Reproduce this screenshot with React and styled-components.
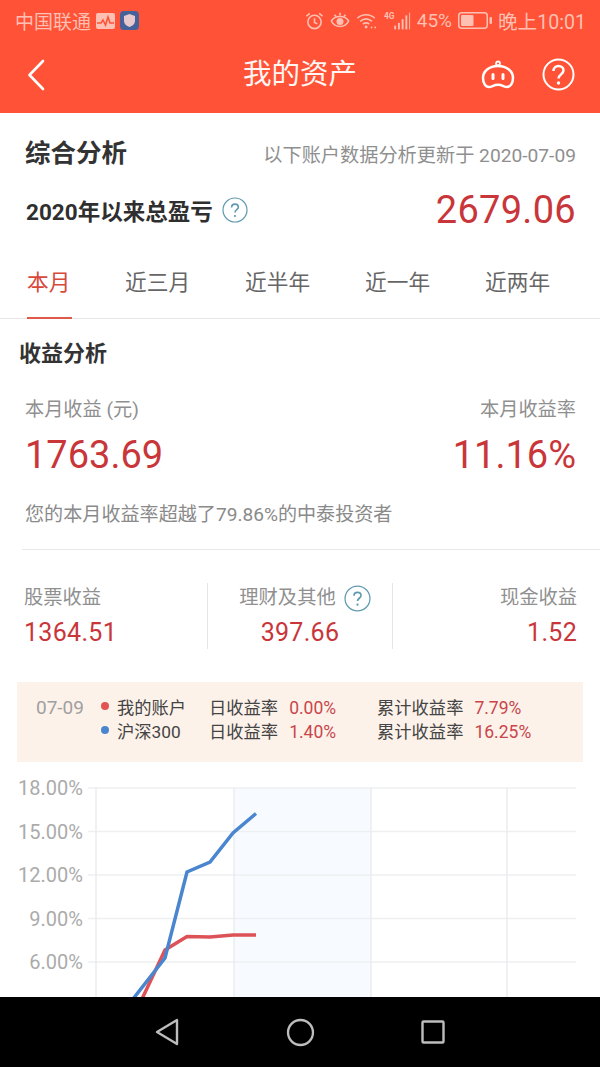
import React from 'react';
import styled, { createGlobalStyle } from 'styled-components';

const Global = createGlobalStyle`
  html, body { margin: 0; padding: 0; background: #fff; }
  body { font-family: "Roboto", "Noto Sans CJK SC", sans-serif; }
  * { box-sizing: border-box; }
`;
const Page = styled.div`
  width: 600px; height: 1067px; display: flex; flex-direction: column; overflow: hidden; background: #fff;
`;
const Top = styled.header`
  height: 113px; background: #ff5236; flex: none; display: flex; flex-direction: column;
`;
const StatusBar = styled.div`
  height: 40px; padding: 1px 14px 0 15px; display: flex; align-items: center; justify-content: space-between;
  color: #fdc0b3; font-size: 19px;
`;
const StatusGroup = styled.div`
  display: flex; align-items: center; gap: ${p => p.$gap || 3}px;
`;
const NavRow = styled.div`
  flex: 1; padding: 0 25px 4px 27px; display: flex; align-items: center; justify-content: space-between; position: relative;
`;
const Title = styled.h1`
  position: absolute; left: 0; right: 0; top: 15px; margin: 0; text-align: center; color: #fff;
  font-size: 28.5px; font-weight: 400; line-height: 40px; opacity: .95;
`;
const NavIcons = styled.div`
  display: flex; align-items: center; gap: 27px; position: relative;
`;
const Main = styled.main`
  flex: 1; min-height: 0; overflow: hidden; display: flex; flex-direction: column;
`;
const Summary = styled.section`
  padding: 23px 24px 0 25px;
`;
const SplitRow = styled.div`
  display: flex; justify-content: space-between; align-items: ${p => p.$align || 'center'};
`;
const Heading = styled.h2`
  margin: 0; font-size: 25.5px; font-weight: 700; line-height: 34px; color: #333;
`;
const UpdateNote = styled.span`
  font-size: 19.2px; color: #8f8f8f; padding-top: 1px;
`;
const TotalRow = styled(SplitRow)`
  margin-top: 19px; height: 42px; padding-left: 1px;
`;
const TotalLabel = styled.div`
  display: flex; align-items: center; gap: 9px; font-size: 22.5px; font-weight: 700; color: #2f2f2f;
`;
const TotalValue = styled.span`
  font-size: 38px; color: #c9363a; line-height: 42px; letter-spacing: .3px;
`;
const Tabs = styled.nav`
  margin-top: 29px; height: 59px; display: flex; border-bottom: 1px solid #e6e6e6; flex: none;
`;
const Tab = styled.div`
  flex: none; width: ${p => p.$first ? 125 : 120}px; padding-left: ${p => p.$first ? 27 : 0}px; display: flex;
  font-size: 21.7px; color: ${p => p.$active ? '#d8483a' : '#666'};
`;
const TabLabel = styled.span`
  height: 59px; line-height: 46px;
  ${p => p.$active ? 'border-bottom: 2px solid #e05a49; width: 45px;' : ''}
`;
const Analysis = styled.section`
  padding: 17px 0 0; flex: none;
`;
const SectionTitle = styled.h3`
  margin: 0 0 0 19px; font-size: 22px; font-weight: 700; line-height: 36px; color: #333;
`;
const EarningsRow = styled(SplitRow)`
  padding: 24px 24px 0 25px;
`;
const Stack = styled.div`
  display: flex; flex-direction: column; align-items: ${p => p.$end ? 'flex-end' : 'flex-start'};
`;
const MutedLabel = styled.span`
  font-size: 19.2px; line-height: 28px; color: #8f8f8f;
`;
const BigValue = styled.span`
  font-size: 38px; line-height: 46px; color: #c9363a; margin-top: 8px;
`;
const Beat = styled.p`
  margin: 23px 0 0 25px; font-size: 19.1px; line-height: 28px; color: #8a8a8a;
`;
const Divider = styled.div`
  margin: 20px 0 0 22px; height: 1px; background: #e8e8e8;
`;
const Breakdown = styled.div`
  display: grid; grid-template-columns: 184px 185px 184px; margin: 33px 23px 0 24px; height: 66px;
`;
const Cell = styled.div`
  display: flex; flex-direction: column; justify-content: space-between;
  align-items: ${p => p.$align}; height: 66px;
  ${p => p.$rule ? 'border-right: 1.5px solid #e5e5e5;' : ''}
`;
const CellLabel = styled.span`
  display: flex; align-items: center; gap: 8px; font-size: 19.3px; line-height: 28px; color: #909090; height: 28px;
  position: relative; top: 1px; left: ${p => p.$shift || 0}px;
`;
const CellValue = styled.span`
  font-size: 25px; line-height: 30px; color: #c9363a; letter-spacing: .3px; margin-top: 5px; height: 31px;
`;
const Legend = styled.div`
  margin: 33px 17px 0; height: 80px; background: #fdf2ea; flex: none; padding: 12px 0 0 19px;
  display: grid; grid-template-columns: 65px 108px 168px auto; grid-auto-rows: 24px;
  font-size: 17.3px; color: #444; align-items: center;
`;
const LegendDate = styled.span`
  color: #a0a0a0; font-size: 19px; grid-row: span 2; align-self: start; line-height: 24px; margin-top: 2px;
`;
const Series = styled.span`
  display: flex; align-items: center; gap: 8px;
`;
const Dot = styled.i`
  width: 8px; height: 8px; border-radius: 50%; background: ${p => p.$c}; flex: none;
`;
const Metric = styled.span`
  display: flex; align-items: baseline; gap: 11px; white-space: nowrap;
`;
const Rate = styled.span`
  color: #c9454a; font-size: 17.5px;
`;
const Clock = styled.span`
  font-size: 19.6px;
`;
const ChartWrap = styled.div`
  flex: 1; min-height: 0; overflow: hidden;
`;
const ChartSvg = styled.svg`
  display: block;
`;
const BottomBar = styled.footer`
  height: 70px; flex: none; background: #000; display: flex; align-items: center; justify-content: center;
`;
const NavKeys = styled.div`
  width: 290px; display: flex; justify-content: space-between; align-items: center;
`;

const Help = ({ size = 26, color = '#5f9ab0' }) => (
  <svg width={size} height={size} viewBox="0 0 26 26" fill="none">
    <circle cx="13" cy="13" r="12" stroke={color} strokeWidth="1.2" />
    <path d="M9.6 10.4c0-2 1.5-3.3 3.4-3.3s3.4 1.2 3.4 3c0 2.6-3.4 2.700-3.400 5.400" stroke={color} strokeWidth="1.6" />
    <circle cx="13" cy="19" r="1.1" fill={color} />
  </svg>
);

const Pulse = () => (
  <svg width="19" height="16" viewBox="0 0 19 16">
    <rect width="19" height="16" rx="2" fill="#fdc0b3" />
    <path d="M1 10h4l2-3 2.5 5L12 4l2 6h4" fill="none" stroke="#ff5236" strokeWidth="1.6" />
  </svg>
);
const Shield = () => (
  <svg width="19" height="19" viewBox="0 0 19 19">
    <rect width="19" height="19" rx="4" fill="#46609a" />
    <path d="M9.5 3l5.5 2v5c0 3-2.400 5-5.500 6C6.400 15 4 13 4 10V5z" fill="#e8c8cc" />
  </svg>
);
const Alarm = () => (
  <svg width="19" height="20" viewBox="0 0 20 20" fill="none" stroke="#fdc0b3" strokeWidth="1.7">
    <circle cx="10" cy="11" r="7" />
    <path d="M10 7v4.500l3 1.500M1.500 5L5 2M18.500 5L15 2" />
  </svg>
);
const Eye = () => (
  <svg width="20" height="20" viewBox="0 0 22 20" fill="none" stroke="#fdc0b3" strokeWidth="1.800">
    <path d="M1.500 10c2-3.500 5.500-5 9.500-5s7.500 1.500 9.500 5c-2 4-5.500 6-9.500 6s-7.500-2-9.500-6z" />
    <circle cx="11" cy="10.500" r="3" fill="#fdc0b3" />
    <path d="M5 3l1.500 2M11 1v3M17 3l-1.500 2" />
  </svg>
);
const Wifi = () => (
  <svg width="22" height="20" viewBox="0 0 24 20" fill="none" stroke="#fdc0b3" strokeWidth="1.700">
    <path d="M1.500 7C7 2 15 2 20.500 7M4.500 10.500c4-3.500 9-3.500 13 0M7.500 13.500c2.500-2 4.500-2 7 0" />
    <circle cx="11" cy="16.500" r="1.600" fill="#fdc0b3" stroke="none" />
    <circle cx="17" cy="17" r="1" fill="#fdc0b3" stroke="none" />
    <circle cx="21" cy="17" r="1" fill="#fdc0b3" stroke="none" />
  </svg>
);
const Signal = () => (
  <svg width="27" height="20" viewBox="0 0 29 20" fill="#fdc0b3">
    <text x="0" y="8" fontSize="9" fontWeight="700" fontFamily="Roboto, sans-serif">4G</text>
    <rect x="11" y="15" width="2" height="4" />
    <rect x="15" y="12" width="2" height="7" />
    <rect x="19" y="8" width="2" height="11" />
    <rect x="23" y="4" width="2" height="15" />
    <rect x="27" y="1" width="1" height="18" />
  </svg>
);
const Battery = () => (
  <svg width="34" height="17" viewBox="0 0 34 17" fill="none">
    <rect x=".75" y=".75" width="28.500" height="15.500" rx="3" stroke="#fdc0b3" strokeWidth="1.500" />
    <rect x="3" y="3" width="12.500" height="11" rx="1" fill="#fdc0b3" />
    <rect x="31.500" y="5" width="2.500" height="7" rx="1" fill="#fdc0b3" />
  </svg>
);
const Back = () => (
  <svg width="18" height="32" viewBox="0 0 18 32" fill="none" stroke="#fff" strokeWidth="2.600" strokeLinecap="round" strokeLinejoin="round">
    <path d="M16 2L2.500 16 16 30" />
  </svg>
);
const Pig = () => (
  <svg width="34" height="29" viewBox="0 0 34 29" fill="none" stroke="#fff" strokeWidth="2.500">
    <path d="M17 6C8 6 2 11.500 2 18c0 5 2.500 9 6 9 3 0 4.500-2.200 9-2.200S23 27 26 27c3.500 0 6-4 6-9C32 11.500 26 6 17 6z" />
    <circle cx="17" cy="3.500" r="2" strokeWidth="1.800" />
    <path d="M12 14.500v4M22 14.500v4" strokeLinecap="round" strokeWidth="3" />
  </svg>
);
const NavHelp = () => (
  <svg width="33" height="33" viewBox="0 0 33 33" fill="none" stroke="#fff">
    <circle cx="16.500" cy="16.500" r="15" strokeWidth="2" />
    <path d="M11.500 13c0-3 2.200-5 5-5s5 1.800 5 4.500c0 3.800-5 4-5 8" strokeWidth="2.500" />
    <circle cx="16.500" cy="25" r="1.700" fill="#fff" stroke="none" />
  </svg>
);

const yLabels = [['18.00%', 788], ['15.00%', 831.5], ['12.00%', 875], ['9.00%', 918.500], ['6.00%', 962]];
const blue = [[133, 999], [165, 958], [187, 872], [210, 862], [233, 833], [256, 813.500]];
const red = [[142, 999], [165, 950], [187, 936.500], [210, 937], [233, 935], [256, 935]];
const ORIGIN = 762;
const pts = a => a.map(([x, y]) => `${x},${y - ORIGIN}`).join(' ');

const Chart = () => (
  <ChartSvg width="600" height="235" viewBox="0 0 600 235">
    <rect x="234" y="26" width="137" height="209" fill="#f7fbff" />
    {yLabels.map(([l, y]) => (
      <g key={l}>
        <text x="83" y={y - ORIGIN + 7} textAnchor="end" fontSize="20" fill="#ababab" fontFamily="Roboto, sans-serif">{l}</text>
        <line x1="88" x2="576" y1={y - ORIGIN} y2={y - ORIGIN} stroke="#eeeff1" strokeWidth="1.300" />
      </g>
    ))}
    {[96, 234, 371, 507].map(x => (
      <line key={x} x1={x} x2={x} y1="26" y2="235" stroke="#e9eaed" strokeWidth="1.300" />
    ))}
    <polyline points={pts(red)} fill="none" stroke="#dd5257" strokeWidth="3.500" />
    <polyline points={pts(blue)} fill="none" stroke="#4a86d0" strokeWidth="3.500" />
  </ChartSvg>
);

export default function App() {
  return (
    <Page>
      <Global />
      <Top>
        <StatusBar>
          <StatusGroup $gap={5}>
            <span>中国联通</span><Pulse /><Shield />
          </StatusGroup>
          <StatusGroup $gap={6}>
            <Alarm /><Eye /><Wifi /><Signal />
            <span>45%</span><Battery />
            <Clock>晚上10:01</Clock>
          </StatusGroup>
        </StatusBar>
        <NavRow>
          <Title>我的资产</Title>
          <Back />
          <NavIcons><Pig /><NavHelp /></NavIcons>
        </NavRow>
      </Top>
      <Main>
        <Summary>
          <SplitRow>
            <Heading>综合分析</Heading>
            <UpdateNote>以下账户数据分析更新于 2020-07-09</UpdateNote>
          </SplitRow>
          <TotalRow>
            <TotalLabel>2020年以来总盈亏 <Help /></TotalLabel>
            <TotalValue>2679.06</TotalValue>
          </TotalRow>
        </Summary>
        <Tabs>
          <Tab $first $active><TabLabel $active>本月</TabLabel></Tab>
          <Tab><TabLabel>近三月</TabLabel></Tab>
          <Tab><TabLabel>近半年</TabLabel></Tab>
          <Tab><TabLabel>近一年</TabLabel></Tab>
          <Tab><TabLabel>近两年</TabLabel></Tab>
        </Tabs>
        <Analysis>
          <SectionTitle>收益分析</SectionTitle>
          <EarningsRow>
            <Stack>
              <MutedLabel>本月收益 (元)</MutedLabel>
              <BigValue>1763.69</BigValue>
            </Stack>
            <Stack $end>
              <MutedLabel>本月收益率</MutedLabel>
              <BigValue>11.16%</BigValue>
            </Stack>
          </EarningsRow>
          <Beat>您的本月收益率超越了79.86%的中泰投资者</Beat>
          <Divider />
          <Breakdown>
            <Cell $align="flex-start" $rule>
              <CellLabel>股票收益</CellLabel>
              <CellValue>1364.51</CellValue>
            </Cell>
            <Cell $align="center" $rule>
              <CellLabel $shift={5}>理财及其他 <Help size={27} /></CellLabel>
              <CellValue>397.66</CellValue>
            </Cell>
            <Cell $align="flex-end">
              <CellLabel>现金收益</CellLabel>
              <CellValue>1.52</CellValue>
            </Cell>
          </Breakdown>
        </Analysis>
        <Legend>
          <LegendDate>07-09</LegendDate>
          <Series><Dot $c="#e25454" />我的账户</Series>
          <Metric>日收益率 <Rate>0.00%</Rate></Metric>
          <Metric>累计收益率 <Rate>7.79%</Rate></Metric>
          <Series><Dot $c="#4a86d0" />沪深300</Series>
          <Metric>日收益率 <Rate>1.40%</Rate></Metric>
          <Metric>累计收益率 <Rate>16.25%</Rate></Metric>
        </Legend>
        <ChartWrap><Chart /></ChartWrap>
      </Main>
      <BottomBar>
        <NavKeys>
          <svg width="24" height="28" viewBox="0 0 24 28" fill="none" stroke="#bdbdbd" strokeWidth="2.400" strokeLinejoin="round"><path d="M22 2v24L2 14z" /></svg>
          <svg width="29" height="29" viewBox="0 0 30 30" fill="none" stroke="#bdbdbd" strokeWidth="2.400"><circle cx="15" cy="15" r="12.900" /></svg>
          <svg width="24" height="24" viewBox="0 0 24 24" fill="none" stroke="#bdbdbd" strokeWidth="2.400"><rect x="1.500" y="1.500" width="21" height="21" rx="1" /></svg>
        </NavKeys>
      </BottomBar>
    </Page>
  );
}
